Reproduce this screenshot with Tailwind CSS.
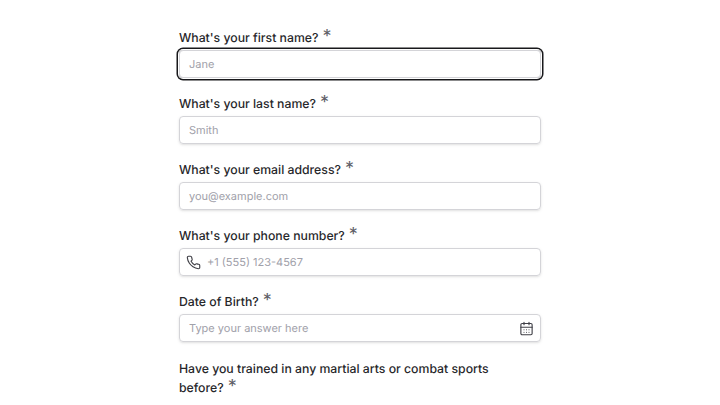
<!DOCTYPE html>
<html lang="en">
<head>
    <meta charset="UTF-8">
    <title>Registration form</title>
    <script src="https://cdn.jsdelivr.net/npm/@tailwindcss/browser@4"></script>
</head>
<body class="h-[405px] overflow-hidden bg-white font-['Inter',sans-serif] [text-rendering:geometricPrecision] antialiased">
    <form class="mx-auto w-[362px] pt-[26px] flex flex-col gap-[14px]">
        <!-- First name, focused -->
        <div>
            <label class="flex h-[24px] pt-[1px] items-center text-[12.25px] font-[450] text-[#27272a]">What's your first name?<span class="ml-1 -mt-1 text-[18px] leading-none font-normal text-[#5f5f68]">*</span></label>
            <div class="h-[28px] rounded-[4px] border border-[#d4d4d8] shadow-[0_0_0_1px_#fff,0_0_0_2.5px_#18181b] flex items-center px-[9px] text-[11px] text-[#a1a1aa]">Jane</div>
        </div>
        <!-- Last name -->
        <div>
            <label class="flex h-[24px] pt-[1px] items-center text-[12.25px] font-[450] text-[#27272a]">What's your last name?<span class="ml-1 -mt-1 text-[18px] leading-none font-normal text-[#5f5f68]">*</span></label>
            <div class="h-[28px] rounded-[4px] border border-[#d4d4d8] shadow-sm flex items-center px-[9px] text-[11px] text-[#a1a1aa]">Smith</div>
        </div>
        <!-- Email -->
        <div>
            <label class="flex h-[24px] pt-[1px] items-center text-[12.25px] font-[450] text-[#27272a]">What's your email address?<span class="ml-1 -mt-1 text-[18px] leading-none font-normal text-[#5f5f68]">*</span></label>
            <div class="h-[28px] rounded-[4px] border border-[#d4d4d8] shadow-sm flex items-center px-[9px] text-[11px] text-[#a1a1aa]">you@example.com</div>
        </div>
        <!-- Phone -->
        <div>
            <label class="flex h-[24px] pt-[1px] items-center text-[12.25px] font-[450] text-[#27272a]">What's your phone number?<span class="ml-1 -mt-1 text-[18px] leading-none font-normal text-[#5f5f68]">*</span></label>
            <div class="h-[28px] rounded-[4px] border border-[#d4d4d8] shadow-sm flex items-center gap-[6px] px-[6px] text-[11px] text-[#a1a1aa]">
                <svg class="w-[15px] h-[15px] text-[#3f3f46]" viewBox="0 0 24 24" fill="none" stroke="currentColor" stroke-width="1.8" stroke-linecap="round" stroke-linejoin="round"><path d="M22 16.92v3a2 2 0 0 1-2.18 2 19.79 19.79 0 0 1-8.63-3.07 19.5 19.5 0 0 1-6-6 19.79 19.79 0 0 1-3.07-8.67A2 2 0 0 1 4.11 2h3a2 2 0 0 1 2 1.72c.13.96.36 1.9.7 2.81a2 2 0 0 1-.45 2.11L8.09 9.91a16 16 0 0 0 6 6l1.27-1.27a2 2 0 0 1 2.11-.45c.91.34 1.85.57 2.81.7A2 2 0 0 1 22 16.92z"/></svg>
                <span>+1 (555) 123-4567</span>
            </div>
        </div>
        <!-- DOB -->
        <div>
            <label class="flex h-[24px] pt-[1px] items-center text-[12.25px] font-[450] text-[#27272a]">Date of Birth?<span class="ml-1 -mt-1 text-[18px] leading-none font-normal text-[#5f5f68]">*</span></label>
            <div class="h-[28px] rounded-[4px] border border-[#d4d4d8] shadow-sm flex items-center justify-between pl-[9px] pr-[6px] text-[11px] text-[#a1a1aa]">
                <span>Type your answer here</span>
                <svg class="w-[15px] h-[15px] text-[#3f3f46]" viewBox="0 0 24 24" fill="none" stroke="currentColor" stroke-width="1.8" stroke-linecap="round" stroke-linejoin="round"><rect x="3" y="4" width="18" height="18" rx="2"/><path d="M8 2v4M16 2v4M3 10h18M8 14h.01M12 14h.01M16 14h.01M8 18h.01M12 18h.01M16 18h.01"/></svg>
            </div>
        </div>
        <!-- Martial arts question -->
        <div class="w-[330px] pt-[3px] text-[12.25px] font-[450] leading-[19px] text-[#27272a]">Have you trained in any martial arts or combat sports before?<span class="ml-1 text-[18px] leading-none font-normal text-[#5f5f68]">*</span></div>
    </form>
</body>
</html>
